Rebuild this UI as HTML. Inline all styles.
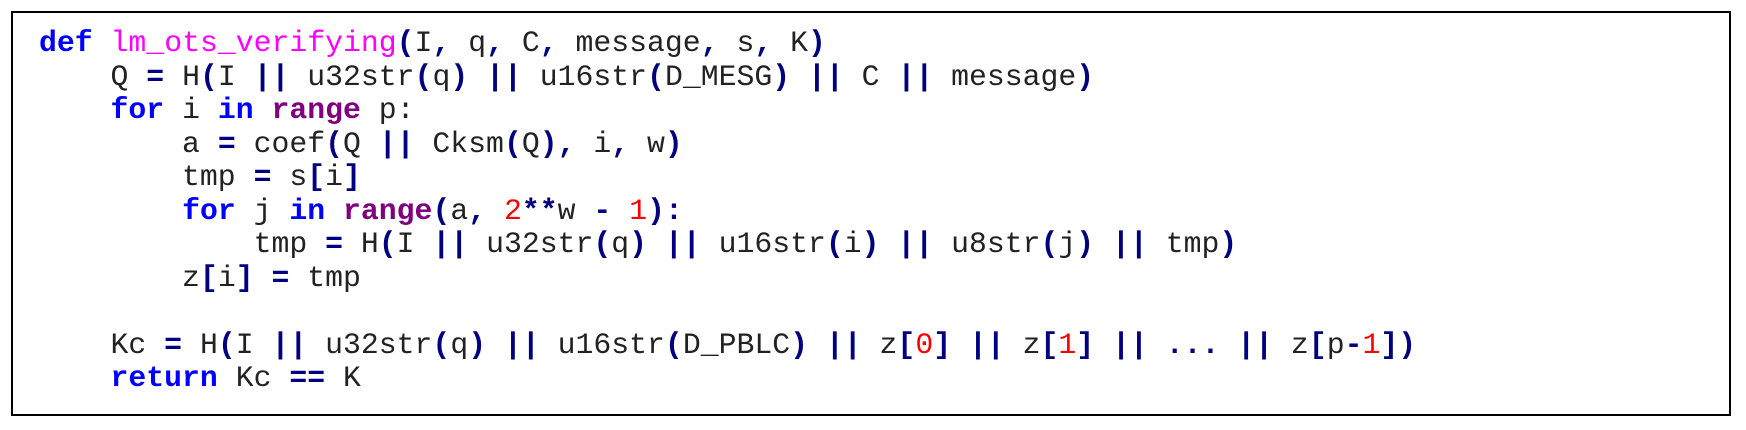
<!DOCTYPE html>
<html><head><style>
html,body{margin:0;padding:0;background:#fff;width:1746px;height:430px;overflow:hidden}
.box{position:absolute;left:11px;top:11px;width:1720px;height:405px;border:2px solid #000;box-sizing:border-box}
pre{position:absolute;left:39px;top:27px;margin:0;font-family:"Liberation Mono",monospace;font-size:29.8px;line-height:33.5px;color:#222}
.k{color:#0000ff;font-weight:bold}
.f{color:#ff00ff}
.o{color:#000080;font-weight:bold}
.r{color:#800080;font-weight:bold}
.n{color:#ff0000}
</style></head><body>
<div class="box"></div>
<pre><span class="k">def</span> <span class="f">lm_ots_verifying</span><span class="o">(</span>I<span class="o">,</span> q<span class="o">,</span> C<span class="o">,</span> message<span class="o">,</span> s<span class="o">,</span> K<span class="o">)</span>
    Q <span class="o">=</span> H<span class="o">(</span>I <span class="o">||</span> u32str<span class="o">(</span>q<span class="o">)</span> <span class="o">||</span> u16str<span class="o">(</span>D_MESG<span class="o">)</span> <span class="o">||</span> C <span class="o">||</span> message<span class="o">)</span>
    <span class="k">for</span> i <span class="k">in</span> <span class="r">range</span> p:
        a <span class="o">=</span> coef<span class="o">(</span>Q <span class="o">||</span> Cksm<span class="o">(</span>Q<span class="o">),</span> i<span class="o">,</span> w<span class="o">)</span>
        tmp <span class="o">=</span> s<span class="o">[</span>i<span class="o">]</span>
        <span class="k">for</span> j <span class="k">in</span> <span class="r">range</span><span class="o">(</span>a<span class="o">,</span> <span class="n">2</span><span class="o">**</span>w <span class="o">-</span> <span class="n">1</span><span class="o">):</span>
            tmp <span class="o">=</span> H<span class="o">(</span>I <span class="o">||</span> u32str<span class="o">(</span>q<span class="o">)</span> <span class="o">||</span> u16str<span class="o">(</span>i<span class="o">)</span> <span class="o">||</span> u8str<span class="o">(</span>j<span class="o">)</span> <span class="o">||</span> tmp<span class="o">)</span>
        z<span class="o">[</span>i<span class="o">]</span> <span class="o">=</span> tmp

    Kc <span class="o">=</span> H<span class="o">(</span>I <span class="o">||</span> u32str<span class="o">(</span>q<span class="o">)</span> <span class="o">||</span> u16str<span class="o">(</span>D_PBLC<span class="o">)</span> <span class="o">||</span> z<span class="o">[</span><span class="n">0</span><span class="o">]</span> <span class="o">||</span> z<span class="o">[</span><span class="n">1</span><span class="o">]</span> <span class="o">||</span> <span class="o">...</span> <span class="o">||</span> z<span class="o">[</span>p<span class="o">-</span><span class="n">1</span><span class="o">])</span>
    <span class="k">return</span> Kc <span class="o">==</span> K</pre>
</body></html>
